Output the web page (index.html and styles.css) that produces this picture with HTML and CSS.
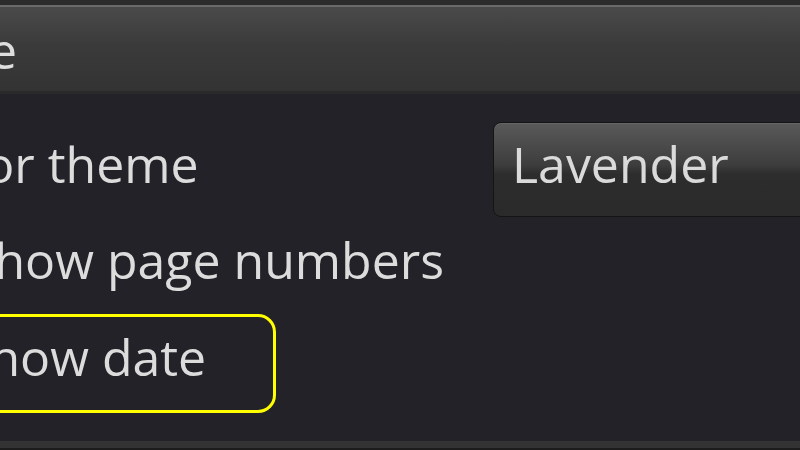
FILE: index.html
```html
<!DOCTYPE html>
<html>
<head>
<meta charset="utf-8">
<link rel="stylesheet" href="styles.css">
</head>
<body>
<div class="screen">
  <header class="titlebar"><span class="title">Page</span></header>
  <main class="settings">
    <div class="row row-theme">
      <span class="label label-theme">Color theme</span>
      <div class="select">Lavender</div>
    </div>
    <div class="row row-numbers">
      <span class="label label-numbers">Show page numbers</span>
    </div>
    <div class="row row-date">
      <span class="label label-date">Show date</span>
    </div>
  </main>
  <footer class="bottombar"></footer>
</div>
</body>
</html>
```
FILE: styles.css
```css
html, body {
  margin: 0;
  padding: 0;
  background: #232228;
}
.screen {
  width: 800px;
  height: 450px;
  overflow: hidden;
  display: flex;
  flex-direction: column;
  font-family: "Open Sans", "Noto Sans", sans-serif;
  color: #dcdcdc;
}
.titlebar {
  height: 86px;
  flex: none;
  border-top: 5px solid #2c2c2c;
  box-shadow: inset 0 2px 0 #6a6a6a;
  border-bottom: 3px solid #2a2a2a;
  background: linear-gradient(#4b4b4b 0%, #3b3b3b 45%, #333333 100%);
  display: flex;
  align-items: center;
}
.title {
  font-size: 50px;
  margin-left: -96px;
  margin-top: 4px;
  color: #dedede;
}
.settings {
  flex: 1;
  display: flex;
  flex-direction: column;
  padding-top: 27px;
}
.row {
  display: flex;
  align-items: center;
  height: 97px;
  flex: none;
}
.label {
  font-size: 50px;
  white-space: nowrap;
  margin-bottom: 14px;
}
.label-theme { margin-left: -90px; margin-bottom: 11px; }
.label-numbers { margin-left: -33px; }
.label-date { margin-left: -1px; }
.select {
  margin-left: auto;
  margin-right: -40px;
  width: 347px;
  height: 95px;
  box-sizing: border-box;
  border: 1px solid #141414;
  border-radius: 8px;
  background: linear-gradient(#5a5a5a 0%, #3d3d3d 45%, #2d2d2d 55%, #2a2a2a 100%);
  box-shadow: inset 0 1px 0 #666;
  font-size: 50px;
  padding-left: 18px;
  padding-bottom: 12px;
  display: flex;
  align-items: center;
  color: #dadada;
}
.row-date {
  align-self: flex-start;
  margin-top: -1px;
  margin-left: -40px;
  padding-left: 0;
  width: 316px;
  height: 99px;
  box-sizing: border-box;
  border: 3px solid #ffff00;
  border-radius: 18px;
}
.bottombar {
  height: 7px;
  flex: none;
  background: #333333;
  border-bottom: 2px solid #1c1c1c;
}
```
